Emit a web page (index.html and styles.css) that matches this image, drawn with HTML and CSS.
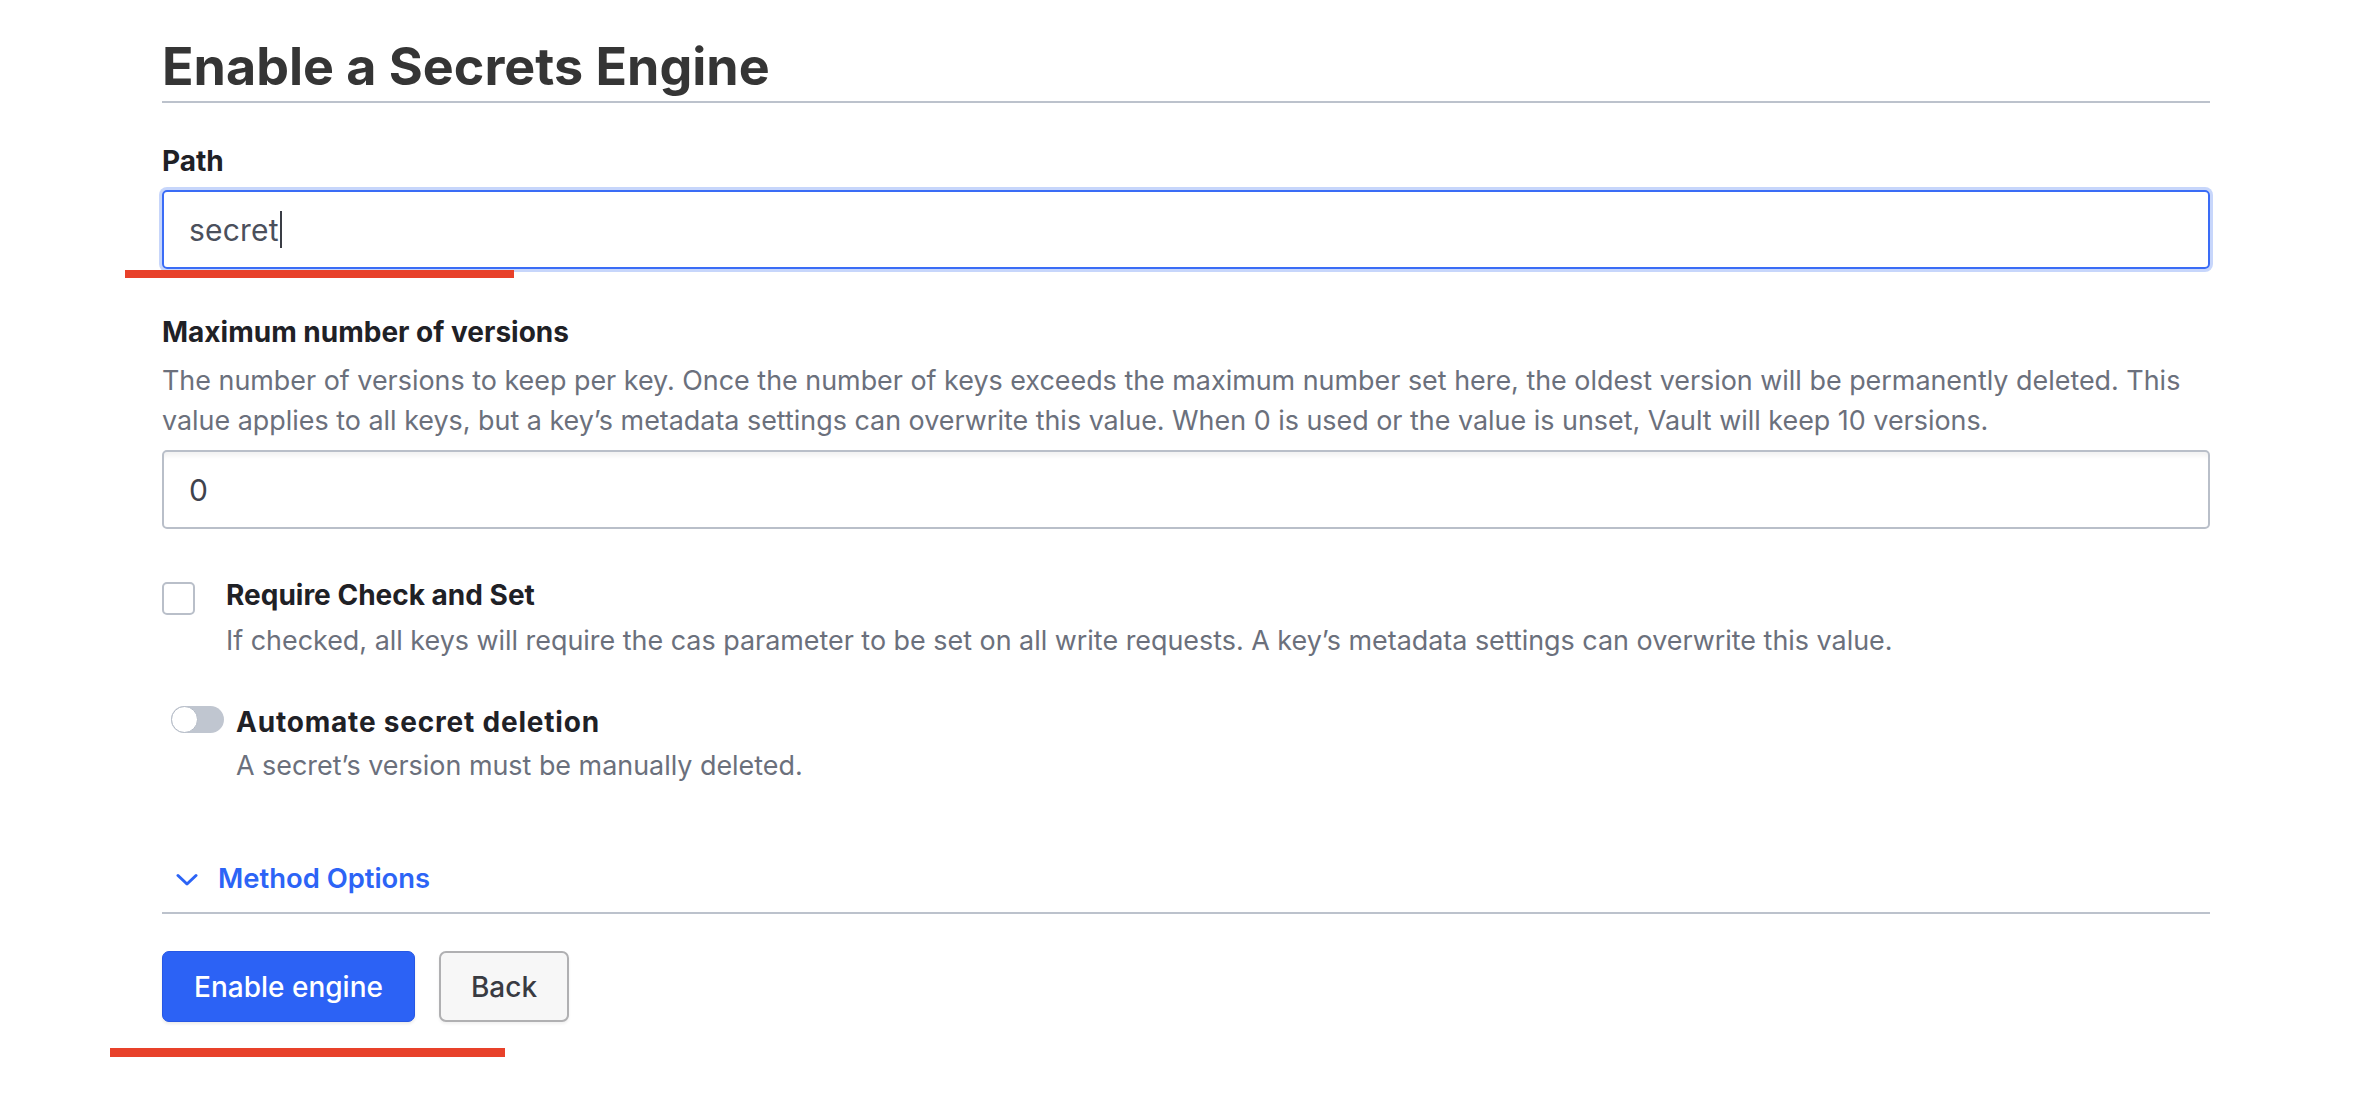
FILE: index.html
```html
<!DOCTYPE html>
<html lang="en">
<head>
<meta charset="utf-8">
<title>Enable a Secrets Engine</title>
<link rel="stylesheet" href="styles.css">
</head>
<body>
<main class="page">
  <h1 class="title">Enable a Secrets Engine</h1>

  <section class="field field-path">
    <label class="label" for="path">Path</label>
    <div class="input input-focused" id="path"><span class="value">secret</span><span class="caret"></span></div>
    <span class="annot annot-path"></span>
  </section>

  <section class="field field-versions">
    <div class="label">Maximum number of versions</div>
    <p class="help">The number of versions to keep per key. Once the number of keys exceeds the maximum number set here, the oldest version will be permanently deleted. This value applies to all keys, but a key’s metadata settings can overwrite this value. When 0 is used or the value is unset, Vault will keep 10 versions.</p>
    <div class="input input-plain"><span class="value">0</span></div>
  </section>

  <section class="check-row">
    <span class="checkbox"></span>
    <div class="check-text">
      <div class="label">Require Check and Set</div>
      <p class="help">If checked, all keys will require the cas parameter to be set on all write requests. A key’s metadata settings can overwrite this value.</p>
    </div>
  </section>

  <section class="toggle-row">
    <span class="toggle"><span class="knob"></span></span>
    <div class="toggle-text">
      <div class="label label-wide">Automate secret deletion</div>
      <p class="help">A secret’s version must be manually deleted.</p>
    </div>
  </section>

  <div class="method">
    <svg class="chevron" width="22" height="14" viewBox="0 0 22 14" aria-hidden="true"><path d="M2 2.5 L11 11 L20 2.5" fill="none" stroke="#2c64f6" stroke-width="3" stroke-linecap="round" stroke-linejoin="round"/></svg>
    <span class="method-text">Method Options</span>
  </div>

  <div class="actions">
    <button class="btn btn-primary" type="button">Enable engine</button>
    <button class="btn btn-secondary" type="button">Back</button>
  </div>
  <div class="annot-bar"></div>
</main>
</body>
</html>
```

FILE: styles.css
```css
* { box-sizing: border-box; }

html, body {
  margin: 0;
  padding: 0;
  background: #ffffff;
}

body {
  font-family: Inter, "Noto Sans", "Liberation Sans", sans-serif;
  color: #1f2126;
}

.page {
  width: 2048px;
  margin-left: 162px;
  padding-top: 35px;
}

.title {
  margin: 0;
  font-size: 52px;
  line-height: 63px;
  font-weight: 700;
  color: #353535;
  padding-bottom: 3px;
  border-bottom: 2px solid #bcc2cc;
}

.label {
  display: block;
  font-size: 28px;
  line-height: 32px;
  font-weight: 700;
  color: #1f2126;
}

.label-wide {
  letter-spacing: 0.8px;
}

.help {
  margin: 0;
  font-size: 26.9px;
  line-height: 40px;
  color: #6b707c;
}

.field-path {
  position: relative;
  margin-top: 42px;
}

.field-path .label {
  margin-bottom: 13px;
}

.input {
  display: flex;
  align-items: center;
  height: 79px;
  padding: 0 25px;
  border-radius: 5px;
  font-size: 30px;
  color: #4b505c;
}

.input-focused {
  border: 2px solid #3a6cf6;
  box-shadow: 0 0 0 3px #c7d6fb;
}

.input-plain {
  border: 2px solid #b9bfc9;
  box-shadow: inset 0 8px 4px -4px rgba(0, 0, 0, 0.05);
  color: #3f434d;
}

.value {
  letter-spacing: 0.2px;
}

.caret {
  display: inline-block;
  width: 2px;
  height: 37px;
  background: #3a3d45;
  margin-left: 1px;
}

.field-versions {
  margin-top: 47px;
}

.field-versions .help {
  margin-top: 12px;
  margin-bottom: 10px;
}

.check-row {
  display: flex;
  align-items: flex-start;
  gap: 31px;
  margin-top: 50px;
}

.checkbox {
  flex: none;
  width: 33px;
  height: 33px;
  margin-top: 3px;
  border: 2px solid #b9bfc9;
  border-radius: 5px;
  background: #fff;
}

.check-text .help {
  margin-top: 9px;
}

.toggle-row {
  display: flex;
  align-items: flex-start;
  gap: 12px;
  margin-top: 46px;
  padding-left: 9px;
}

.toggle {
  flex: none;
  position: relative;
  width: 53px;
  height: 27px;
  border-radius: 14px;
  background: #c0c6d0;
}

.knob {
  position: absolute;
  left: 0;
  top: 0;
  width: 27px;
  height: 27px;
  border-radius: 50%;
  background: #ffffff;
  border: 1.5px solid #b4bbc6;
}

.toggle-text .help {
  margin-top: 7px;
}

.method {
  display: flex;
  align-items: center;
  gap: 20px;
  margin-top: 77px;
  padding-left: 14px;
  padding-bottom: 18px;
  border-bottom: 2px solid #bcc2cc;
}

.chevron {
  flex: none;
  margin-top: 4px;
}

.method-text {
  font-size: 27.4px;
  line-height: 32px;
  font-weight: 600;
  color: #2c64f6;
}

.actions {
  display: flex;
  gap: 24px;
  margin-top: 37px;
}

.btn {
  height: 71px;
  border-radius: 7px;
  font-family: Inter, "Noto Sans", "Liberation Sans", sans-serif;
  font-size: 28px;
  font-weight: 500;
  cursor: pointer;
  padding: 0;
}

.btn-primary {
  width: 253px;
  background: #2c62f5;
  border: 1px solid #2657e4;
  color: #ffffff;
  box-shadow: 0 2px 3px rgba(0, 0, 0, 0.08);
}

.btn-secondary {
  width: 130px;
  background: #f7f7f7;
  border: 2px solid #b0b0b2;
  color: #393b42;
  box-shadow: 0 2px 3px rgba(0, 0, 0, 0.06);
}

.annot {
  position: absolute;
  display: block;
  background: #e8412a;
}

.annot-path {
  left: -37px;
  bottom: -9px;
  width: 389px;
  height: 8px;
}

.annot-bar {
  width: 395px;
  height: 9px;
  margin-top: 26px;
  margin-left: -52px;
  background: #e8412a;
}
```
